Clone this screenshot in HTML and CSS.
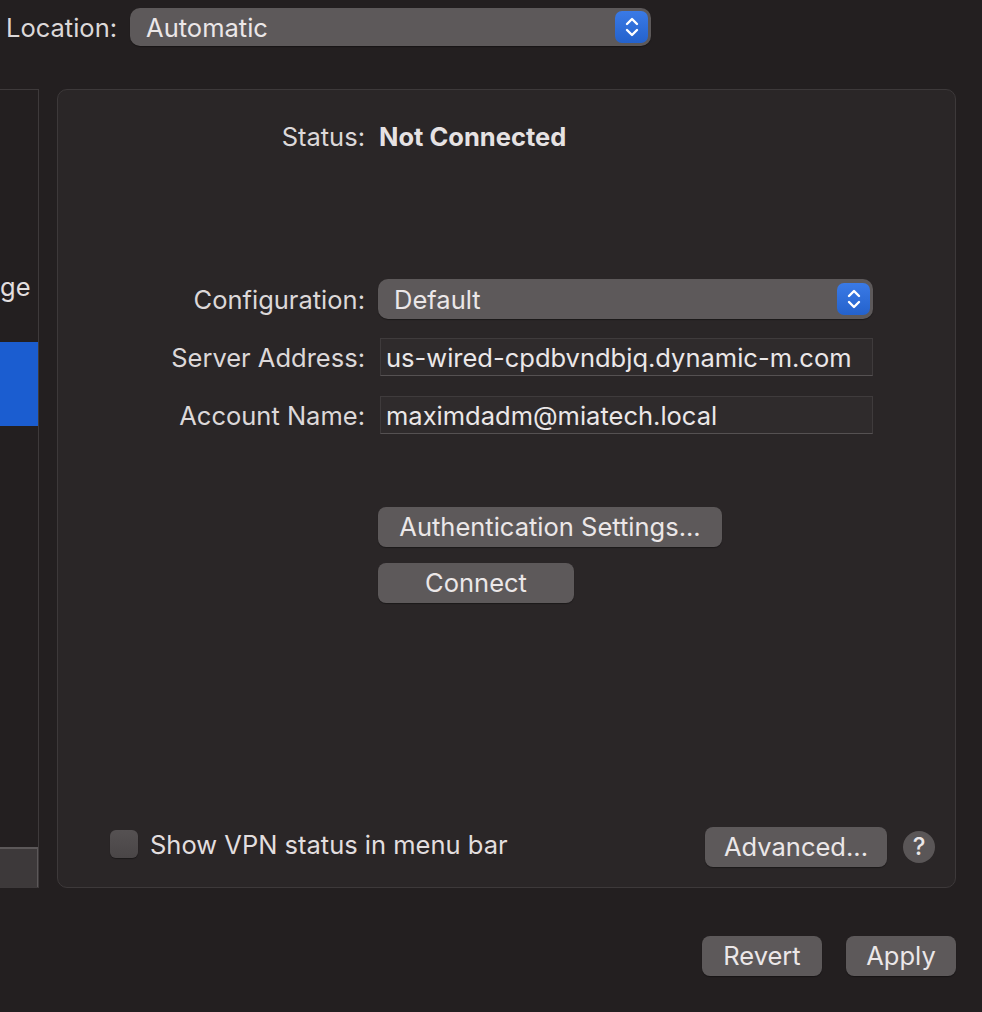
FILE: index.html
```html
<!DOCTYPE html>
<html>
<head>
<meta charset="utf-8">
<link rel="stylesheet" href="styles.css">
</head>
<body>
<div class="window">
  <div class="location-row">
    <span class="label">Location:</span>
    <div class="popup location-popup">
      <span class="popup-text">Automatic</span>
      <span class="stepper">
        <svg width="20" height="26" viewBox="0 0 20 26"><path d="M5 10 L10 5 L15 10 M5 16 L10 21 L15 16" fill="none" stroke="#fff" stroke-width="2.4" stroke-linecap="round" stroke-linejoin="round"/></svg>
      </span>
    </div>
  </div>
  <div class="main-row">
    <div class="sidebar">
      <div class="side-item">ge</div>
      <div class="side-selected"></div>
      <div class="side-spacer"></div>
      <div class="side-toolbar"></div>
    </div>
    <div class="panel">
      <div class="form">
        <div class="row status-row">
          <span class="label">Status:</span>
          <span class="status-value">Not Connected</span>
        </div>
        <div class="row config-row">
          <span class="label">Configuration:</span>
          <div class="popup config-popup">
            <span class="popup-text">Default</span>
            <span class="stepper">
              <svg width="20" height="26" viewBox="0 0 20 26"><path d="M5 10 L10 5 L15 10 M5 16 L10 21 L15 16" fill="none" stroke="#fff" stroke-width="2.4" stroke-linecap="round" stroke-linejoin="round"/></svg>
            </span>
          </div>
        </div>
        <div class="row field-row server-row">
          <span class="label">Server Address:</span>
          <div class="field">us-wired-cpdbvndbjq.dynamic-m.com</div>
        </div>
        <div class="row field-row account-row">
          <span class="label">Account Name:</span>
          <div class="field">maximdadm@miatech.local</div>
        </div>
        <div class="row button-row auth-row">
          <span></span>
          <div class="btn auth-btn">Authentication Settings...</div>
        </div>
        <div class="row button-row connect-row">
          <span></span>
          <div class="btn connect-btn">Connect</div>
        </div>
      </div>
      <div class="panel-footer">
        <div class="check">
          <span class="checkbox"></span>
          <span class="check-label">Show VPN status in menu bar</span>
        </div>
        <div class="footer-right">
          <div class="btn advanced-btn">Advanced...</div>
          <div class="help">?</div>
        </div>
      </div>
    </div>
  </div>
  <div class="bottom-row">
    <div class="btn revert-btn">Revert</div>
    <div class="btn apply-btn">Apply</div>
  </div>
</div>
</body>
</html>
```

FILE: styles.css
```css
html, body {
  margin: 0;
  padding: 0;
  background: #231f20;
}
body {
  width: 982px;
  height: 1012px;
  overflow: hidden;
  font-family: Inter, "Noto Sans", sans-serif;
  font-size: 25.5px;
  color: #e2dedf;
}
.window {
  display: flex;
  flex-direction: column;
}
.location-row {
  display: flex;
  align-items: center;
  height: 38px;
  margin-top: 8px;
  padding-left: 6px;
  gap: 13px;
}
.label {
  color: #dcd8d9;
}
.popup {
  display: flex;
  align-items: center;
  justify-content: space-between;
  background: #5d595a;
  border-radius: 10px;
  box-shadow: 0 1px 1px rgba(0,0,0,0.35);
  box-sizing: border-box;
  padding: 0 3px 0 16px;
}
.popup-text {
  color: #ebe7e8;
}
.location-popup {
  width: 521px;
  height: 38px;
}
.stepper {
  width: 33px;
  height: 32px;
  border-radius: 7px;
  background: linear-gradient(#3a7ae6, #2462cc);
  display: flex;
  align-items: center;
  justify-content: center;
}
.main-row {
  display: flex;
  margin-top: 43px;
  height: 799px;
}
.sidebar {
  width: 39px;
  box-sizing: border-box;
  border: 1px solid #3e3a3b;
  border-left: none;
  display: flex;
  flex-direction: column;
  overflow: hidden;
  background: #231f20;
}
.side-item {
  margin-top: 179px;
  height: 36px;
  line-height: 36px;
  color: #e2dedf;
  white-space: nowrap;
}
.side-selected {
  margin-top: 37px;
  height: 84px;
  background: #1b5dd0;
}
.side-spacer {
  flex: 1;
}
.side-toolbar {
  height: 40px;
  background: #3d393a;
  border-top: 2px solid #5c5859;
  border-right: 2px solid #5c5859;
  box-sizing: border-box;
  margin-right: -1px;
}
.panel {
  margin-left: 18px;
  width: 899px;
  box-sizing: border-box;
  border: 1px solid #3d393a;
  border-radius: 10px;
  background: #2a2627;
  display: flex;
  flex-direction: column;
  justify-content: space-between;
}
.form {
  display: flex;
  flex-direction: column;
}
.row {
  display: grid;
  grid-template-columns: 307px 495px;
  column-gap: 13px;
  align-items: center;
}
.row > .label {
  text-align: right;
}
.status-row {
  margin-top: 31px;
  height: 30px;
}
.status-value {
  font-weight: 700;
  color: #e6e2e3;
  margin-left: 1px;
}
.config-row {
  margin-top: 128px;
}
.config-popup {
  height: 40px;
  padding-left: 16px;
}
.field-row {
  margin-top: 19px;
}
.account-row {
  margin-top: 20px;
}
.field {
  margin-left: 2px;
  width: 493px;
  height: 38px;
  box-sizing: border-box;
  background: #2f2b2c;
  border: 1px solid #3f3b3c;
  border-bottom-color: #555152;
  padding: 0 5px;
  line-height: 38px;
  color: #ebe7e8;
  white-space: nowrap;
}
.btn {
  height: 40px;
  line-height: 40px;
  box-sizing: border-box;
  background: #5d595a;
  border-radius: 8px;
  box-shadow: 0 1px 1px rgba(0,0,0,0.35);
  text-align: center;
  color: #ebe7e8;
}
.button-row {
  justify-items: start;
}
.auth-row {
  margin-top: 73px;
}
.auth-btn {
  width: 344px;
}
.connect-row {
  margin-top: 16px;
}
.connect-btn {
  width: 196px;
}
.panel-footer {
  display: flex;
  align-items: center;
  justify-content: space-between;
  padding: 0 20px 20px 52px;
}
.check {
  display: flex;
  align-items: center;
  gap: 12px;
}
.check-label {
  margin-top: -6px;
}
.checkbox {
  width: 28px;
  height: 28px;
  border-radius: 6px;
  background: linear-gradient(#555152, #4a4647);
  box-shadow: 0 1px 1px rgba(0,0,0,0.35);
  margin-top: -7px;
}
.footer-right {
  display: flex;
  align-items: center;
  gap: 16px;
}
.advanced-btn {
  width: 182px;
}
.help {
  width: 32px;
  height: 32px;
  border-radius: 50%;
  background: #5a5657;
  color: #ebe7e8;
  text-align: center;
  line-height: 32px;
  font-size: 24px;
  font-weight: 500;
}
.bottom-row {
  display: flex;
  justify-content: flex-end;
  gap: 24px;
  margin-top: 48px;
  padding-right: 26px;
}
.revert-btn {
  width: 120px;
}
.apply-btn {
  width: 110px;
}
```
